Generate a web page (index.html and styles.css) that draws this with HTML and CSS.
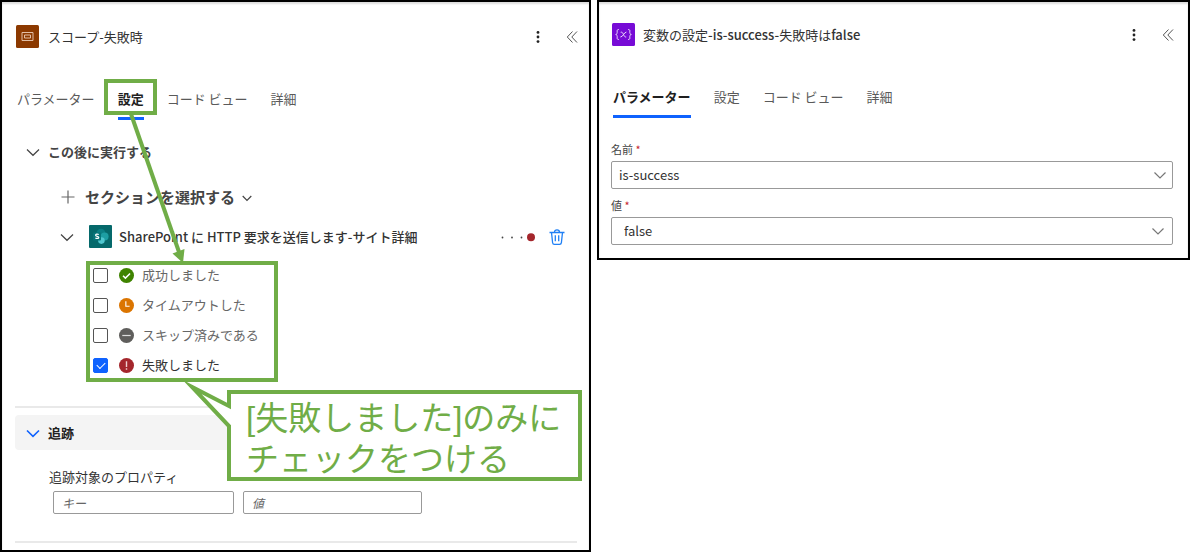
FILE: index.html
```html
<!DOCTYPE html>
<html lang="ja">
<head>
<meta charset="utf-8">
<title>スコープ-失敗時</title>
<link rel="stylesheet" href="styles.css">
</head>
<body>
<main class="board">
  <section class="panel panel-scope">
    <header class="panel-head">
      <svg class="app-icon" viewBox="0 0 23 23" aria-hidden="true">
        <rect width="23" height="23" rx="1.5" fill="#8c3900"/>
        <path d="M6 7.5h11v8H6zM8.500 10h6v3h-6z" fill="none" stroke="#e3bfa6"/>
      </svg>
      <h1 class="panel-title">スコープ-失敗時</h1>
      <button class="icon-btn" type="button" aria-label="その他">
        <svg viewBox="0 0 16 16" fill="#222"><circle cx="8" cy="3.4" r="1.4"/><circle cx="8" cy="8" r="1.4"/><circle cx="8" cy="12.6" r="1.4"/></svg>
      </button>
      <button class="icon-btn" type="button" aria-label="折りたたむ">
        <svg viewBox="0 0 16 16" fill="none" stroke="#555"><path d="M8.5 2.5 3.3 8l5.2 5.5M13 2.5 7.8 8l5.2 5.5"/></svg>
      </button>
    </header>
    <nav class="tabs">
      <button class="tab" type="button">パラメーター</button>
      <button class="tab active marked" type="button">設定</button>
      <button class="tab" type="button">コード ビュー</button>
      <button class="tab" type="button">詳細</button>
    </nav>

    <button class="section-head" type="button">
      <svg class="chev" viewBox="0 0 14 14"><path d="M1 4.500 7 10.300l6-5.800"/></svg>この後に実行する
    </button>
    <div class="run-after">
      <button class="select-section" type="button">
        <svg class="plus" viewBox="0 0 14 14"><path d="M7 .5v13M.5 7h13"/></svg>セクションを選択する
        <svg class="chev-small" viewBox="0 0 10 10"><path d="M.7 4 5 8.300 9.300 4"/></svg>
      </button>
      <div class="action-row">
        <svg class="chev" viewBox="0 0 14 14"><path d="M1 4.5 7 10.3l6-5.8"/></svg>
        <svg class="app-icon" viewBox="0 0 23 23" aria-hidden="true">
          <rect width="23" height="23" rx="1" fill="#05696b"/>
          <circle cx="12" cy="8.2" r="4.4" fill="#0b7f84"/>
          <circle cx="15.6" cy="11.6" r="4" fill="#1d9ea3"/>
          <circle cx="12.4" cy="15.6" r="3.3" fill="#4fc7cf"/>
          <rect x="4" y="7.4" width="8" height="8" rx="1" fill="#077478"/>
          <path d="M9.8 9.5c-1.2-.6-3.2-.5-3.2.7 0 1.4 3.2.8 3.2 2.2 0 1.300-2.200 1.300-3.400.6" fill="none" stroke="#fff" stroke-width="1.200"/>
        </svg>
        <span class="action-name">SharePoint に HTTP 要求を送信します-サイト詳細</span>
        <svg class="state-dots" viewBox="0 0 36 10" aria-hidden="true">
          <g fill="#444"><circle cx="2.500" cy="5.500" r=".9"/><circle cx="12" cy="5.500" r=".9"/><circle cx="21.500" cy="5.500" r=".9"/></g>
          <circle cx="31" cy="5.300" r="4" fill="#a4262c"/>
        </svg>
        <button class="icon-btn" type="button" aria-label="削除">
          <svg viewBox="0 0 16 16" fill="none" stroke="#2080f5" stroke-width="1.300"><path d="M.5 3.500h15M2.500 3.500l1.100 10.200q.2 1.600 1.800 1.600h5.200q1.600 0 1.800-1.600L13.500 3.500M5.500 3.300q0-2.500 2.500-2.500t2.500 2.500M6.300 6.300v6M9.700 6.300v6"/></svg>
        </button>
      </div>
      <fieldset class="states" aria-label="実行条件">
        <label class="state"><input class="box" type="checkbox">
          <svg class="badge" viewBox="0 0 16 16"><circle cx="8" cy="8" r="8" fill="#3f8300"/><path d="m4.300 8.300 2.500 2.500 5-5" fill="none" stroke="#fff" stroke-width="1.600"/></svg>成功しました</label>
        <label class="state"><input class="box" type="checkbox">
          <svg class="badge" viewBox="0 0 16 16"><circle cx="8" cy="8" r="8" fill="#db7500"/><path d="M7.300 3.500v5.300h4" fill="none" stroke="#fff" stroke-width="1.200"/></svg>タイムアウトした</label>
        <label class="state"><input class="box" type="checkbox">
          <svg class="badge" viewBox="0 0 16 16"><circle cx="8" cy="8" r="8" fill="#5f5e5c"/><path d="M3.500 8h9" fill="none" stroke="#ddd" stroke-width="1.300"/></svg>スキップ済みである</label>
        <label class="state on"><input class="box" type="checkbox" checked>
          <svg class="badge" viewBox="0 0 16 16"><circle cx="8" cy="8" r="8" fill="#a4262c"/><path d="M8 3.500v6M8 11v1.600" fill="none" stroke="#f0d0d0" stroke-width="1.500"/></svg>失敗しました</label>
      </fieldset>
    </div>

    <hr class="rule">
    <button class="section-head bar" type="button">
      <svg class="chev" viewBox="0 0 14 14"><path d="M1 4.500 7 10.300l6-5.800"/></svg>追跡
    </button>
    <div class="tracked">
      <p class="tracked-label">追跡対象のプロパティ</p>
      <div class="pair">
        <input class="field" type="text" placeholder="キー" aria-label="キー">
        <input class="field" type="text" placeholder="値" aria-label="値">
      </div>
    </div>
    <hr class="rule">

    <svg class="notes" viewBox="0 0 591 552" aria-hidden="true">
      <path d="M131 114 179 252" fill="none" stroke="#70ad47" stroke-width="4"/>
      <path d="M183 263 172.500 253.500 184.500 249z" fill="#70ad47"/>
      <path d="M229 392h351v87H229v-53L192 387l37 19z" fill="#fff" stroke="#70ad47" stroke-width="4" stroke-miterlimit="12"/>
    </svg>
    <p class="callout">[失敗しました]のみに<br>チェックをつける</p>
  </section>

  <section class="panel panel-variable">
    <header class="panel-head">
      <svg class="app-icon" viewBox="0 0 23 23" aria-hidden="true">
        <rect width="23" height="23" rx="1.500" fill="#770bd6"/>
        <path d="M6.800 6.500c-2 0-1.600 1-1.600 2.800 0 1.300-.4 2-1.500 2.200 1.100.2 1.500.9 1.500 2.200 0 1.800-.4 2.800 1.600 2.800M16.200 6.500c2 0 1.600 1 1.600 2.800 0 1.300.4 2 1.500 2.200-1.100.2-1.500.9-1.500 2.200 0 1.800.4 2.800-1.600 2.800M8.700 9.300c2.800-1.200 2.600 5.200 5.500 4.700M14.400 9.100c-2.300 0-3.400 5-6 4.900" fill="none" stroke="#ecd9fb"/>
      </svg>
      <h2 class="panel-title variable-title">変数の設定<span class="latin">-is-success-</span>失敗時は<span class="latin">false</span></h2>
      <button class="icon-btn" type="button" aria-label="その他">
        <svg viewBox="0 0 16 16" fill="#222"><circle cx="8" cy="3.400" r="1.400"/><circle cx="8" cy="8" r="1.400"/><circle cx="8" cy="12.600" r="1.400"/></svg>
      </button>
      <button class="icon-btn" type="button" aria-label="折りたたむ">
        <svg viewBox="0 0 16 16" fill="none" stroke="#555"><path d="M8.500 2.500 3.300 8l5.200 5.500M13 2.500 7.800 8l5.200 5.500"/></svg>
      </button>
    </header>
    <nav class="tabs">
      <button class="tab active" type="button">パラメーター</button>
      <button class="tab" type="button">設定</button>
      <button class="tab" type="button">コード ビュー</button>
      <button class="tab" type="button">詳細</button>
    </nav>
    <div class="form">
      <label class="form-label" for="var-name">名前 <span class="req">*</span></label>
      <div class="picker">
        <select id="var-name" class="select"><option>is-success</option></select>
        <svg class="chev picker-chev" viewBox="0 0 14 14"><path d="M1.500 4.500 7 10l5.500-5.500"/></svg>
      </div>
      <label class="form-label" for="var-value">値 <span class="req">*</span></label>
      <div class="picker value">
        <select id="var-value" class="select"><option>false</option></select>
        <svg class="chev picker-chev" viewBox="0 0 14 14"><path d="M1.500 4.500 7 10l5.500-5.500"/></svg>
      </div>
    </div>
  </section>
</main>
</body>
</html>
```
FILE: styles.css
```css
* {
  box-sizing: border-box;
}

body {
  margin: 0;
  background: #fff;
  color: #333;
  font: 13px/20px "Noto Sans CJK JP", sans-serif;
}

button {
  margin: 0;
  padding: 0;
  border: 0;
  background: none;
  color: inherit;
  font: inherit;
  text-align: left;
}

svg {
  display: block;
  flex: none;
}

.board {
  display: grid;
  grid-template-columns: 591fr 593fr;
  align-items: start;
  gap: 6px;
}

.panel {
  position: relative;
  padding: 23px 12px 7px 13px;
  border: 2px solid #000;
  box-shadow: inset 0 2px 2px #ddd;
}

.panel-variable {
  padding: 21px 15px 13px 12px;
}

/* Header */
.panel-head {
  display: flex;
  align-items: center;
  margin-right: -3px;
  padding-left: 1px;
}

.app-icon {
  width: 23px;
  height: 23px;
}

.panel-title {
  flex: 1;
  margin: 0 0 0 9px;
  font-size: 13px;
  font-weight: 400;
}

.variable-title {
  margin-left: 8px;
}

.latin {
  font-weight: 500;
}

.icon-btn svg {
  width: 16px;
  height: 16px;
}

.panel-head .icon-btn + .icon-btn {
  margin-left: 18px;
}

/* Tabs */
.tabs {
  display: flex;
  gap: 23px;
  margin-top: 41px;
  padding-left: 2px;
}

.tab {
  position: relative;
  padding-bottom: 8px;
  border-bottom: 3px solid transparent;
  color: #5a5a5a;
  white-space: nowrap;
}

.tab.active {
  border-bottom-color: #0f62fe;
  color: #1f1f1f;
  font-weight: 700;
}

.tab.marked::after {
  content: "";
  position: absolute;
  inset: -10px -13px 2px -14px;
  border: 4px solid #70ad47;
}

/* Collapsible sections */
.section-head {
  display: flex;
  align-items: center;
  gap: 8px;
  width: 100%;
  margin-top: 22px;
  padding-left: 11px;
  color: #444;
  font-weight: 700;
}

.chev,
.plus,
.chev-small {
  width: 14px;
  height: 14px;
  fill: none;
  stroke: #444;
  stroke-width: 1.2;
}

.chev-small {
  width: 10px;
  height: 10px;
}

.section-head.bar {
  height: 35px;
  margin-top: 7px;
  border-radius: 4px;
  background: #f4f4f4;
  color: #222;
}

.bar .chev {
  stroke: #0f62fe;
  stroke-width: 1.6;
}

.run-after {
  padding-left: 45px;
}

.select-section {
  display: flex;
  align-items: center;
  gap: 7px;
  margin-top: 25px;
  padding-left: 1px;
  color: #444;
  font-size: 15px;
  font-weight: 700;
}

.select-section .plus {
  margin-right: 3px;
  stroke: #666;
}

.action-row {
  display: flex;
  align-items: center;
  margin-top: 18px;
  padding-right: 12px;
}

.action-row .app-icon {
  margin: 0 7px 0 15px;
}

.action-name {
  flex: 1;
  font-weight: 500;
}

.state-dots {
  width: 36px;
  height: 10px;
  margin-right: 13px;
}

.states {
  display: flex;
  flex-direction: column;
  gap: 10px;
  width: 192px;
  margin: 13px 0 0 26px;
  padding: 0 3px 3px;
  border: 4px solid #70ad47;
}

.state {
  display: flex;
  align-items: center;
  color: #666;
}

.state.on {
  color: #333;
}

.box {
  appearance: none;
  width: 15px;
  height: 15px;
  margin: 0;
  border: 1px solid #555;
  border-radius: 2px;
  background: #fff;
}

.box:checked {
  display: grid;
  place-items: center;
  border-color: #0f62fe;
  background: #0f62fe;
}

.box:checked::before {
  content: "";
  width: 7px;
  height: 4px;
  margin-bottom: 2px;
  border: solid #fff;
  border-width: 0 0 1px 1px;
  transform: rotate(-45deg);
}

.badge {
  width: 15px;
  height: 15px;
  margin: 0 8px 0 11px;
}

.rule {
  height: 2px;
  margin: 24px 0 0;
  border: 0;
  background: #e9e9e9;
}

.tracked {
  margin-top: 17px;
  padding-left: 34px;
}

.tracked-label {
  margin: 0;
}

.pair {
  display: grid;
  grid-template-columns: 181px 179px;
  gap: 9px;
  margin: 4px 0 0 4px;
}

.field {
  width: 100%;
  height: 23px;
  padding: 0 8px;
  border: 1px solid #999;
  border-radius: 2px;
  font: 12px/20px "Noto Sans CJK JP", sans-serif;
}

.field::placeholder {
  color: #666;
  font-style: italic;
}

.tracked + .rule {
  margin-top: 27px;
}

/* Annotations drawn over the panel */
.notes {
  position: absolute;
  top: -2px;
  left: -2px;
  width: 591px;
  height: 552px;
  pointer-events: none;
}

.callout {
  position: absolute;
  top: 396px;
  left: 244px;
  margin: 0;
  color: #70ad47;
  font-family: "Liberation Sans", "Noto Sans CJK JP", sans-serif;
  font-size: 33px;
  line-height: 41px;
  white-space: nowrap;
}

/* Variable form */
.form {
  display: flex;
  flex-direction: column;
  margin-top: 21px;
}

.form-label {
  color: #444;
  font-size: 11px;
}

.req {
  color: #c4262c;
}

.picker {
  position: relative;
  margin: 2px 0 6px;
}

.picker.value {
  margin-bottom: 0;
}

.select {
  display: block;
  appearance: none;
  width: 100%;
  height: 28px;
  padding: 0 24px 0 7px;
  border: 1px solid #999;
  border-radius: 2px;
  background: #fff;
  color: #333;
  font: 13px/20px "Noto Sans CJK JP", sans-serif;
}

.value .select {
  padding-left: 12px;
}

.picker-chev {
  position: absolute;
  top: 7px;
  right: 6px;
  stroke: #777;
  pointer-events: none;
}

.value .picker-chev {
  right: 8px;
}
```
